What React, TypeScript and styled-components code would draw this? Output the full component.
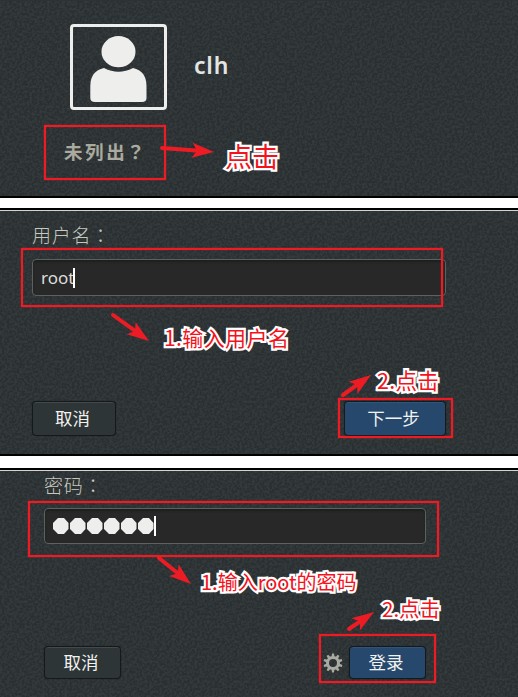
import React from "react";
import styled, { createGlobalStyle } from "styled-components";

const RED = "#ed1c24";
const CJK = '"Noto Sans CJK SC", sans-serif';

const GlobalStyle = createGlobalStyle`
  *, *::before, *::after { box-sizing: border-box; }
  body { margin: 0; background: #fff; font-family: ${CJK}; overflow: hidden; }
`;

const Page = styled.main`
  width: 518px;
  height: 697px;
  display: flex;
  flex-direction: column;
  gap: 10px;
  overflow: hidden;
`;

const Panel = styled.section<{ $height: number; $lit?: boolean; $after?: number }>`
  position: relative;
  flex: none;
  display: flex;
  flex-direction: column;
  height: ${(p) => p.$height}px;
  margin-bottom: ${(p) => p.$after ?? 0}px;
  border-bottom: 2px solid #000;
  border-top: ${(p) => (p.$lit ? "2px solid #000" : "0")};
  background: #2d3335;
  box-shadow: ${(p) => (p.$lit ? "inset 0 1px #d2d3d3" : "none")};
`;

const Grain = styled.svg`
  position: absolute;
  left: 0;
  top: 1px;
  width: 100%;
  height: calc(100% - 1px);
  opacity: 0.06;
`;

const UserRow = styled.div`
  position: relative;
  display: flex;
  align-items: center;
  gap: 27px;
  padding: 24px 0 0 70px;
`;

const Avatar = styled.div`
  width: 97px;
  height: 86px;
  border: 3px solid #eeeeec;
  border-radius: 4px;
  svg { display: block; }
`;

const UserName = styled.span`
  font: 600 23px/30px "Noto Sans", sans-serif;
  letter-spacing: 0.8px;
  color: #e3e5e3;
  margin-top: -4px;
`;

/* Full-width punctuation centred in its cell. */
const Punct = styled.span`
  font-family: "Noto Sans CJK TC", sans-serif;
`;

const NotListed = styled.a`
  position: relative;
  margin: 26px 0 0 64px;
  font: 700 18.5px/30px ${CJK};
  letter-spacing: 2.6px;
  color: #aaaa9f;
  ${Punct} { margin-left: -1px; }
`;

const Label = styled.label<{ $x: number; $y: number }>`
  position: relative;
  margin: ${(p) => p.$y}px 0 0 ${(p) => p.$x}px;
  height: 28px;
  font-size: 19px;
  line-height: 26px;
  letter-spacing: 0.7px;
  font-weight: 300;
  color: #c6c8be;
`;

const Field = styled.div<{ $x: number; $y: number; $w: number; $h: number }>`
  position: relative;
  display: flex;
  align-items: center;
  width: ${(p) => p.$w}px;
  height: ${(p) => p.$h}px;
  margin: ${(p) => p.$y}px 0 0 ${(p) => p.$x}px;
  padding: 0 8px;
  border: 1px solid #5c615e;
  border-radius: 4px;
  background: #282828;
  box-shadow: inset 0 2px 2px #1d1f1f;
  font: 17px/24px "Noto Sans", sans-serif;
  color: #dddddb;
`;

const Caret = styled.i`
  width: 2px;
  height: 20px;
  margin-left: -1px;
  background: #fff;
`;

const Dots = styled.svg`
  display: block;
  margin-right: 1px;
`;

const Actions = styled.div<{ $x: number; $y: number; $right: number }>`
  position: relative;
  display: flex;
  align-items: center;
  margin-top: ${(p) => p.$y}px;
  padding: 0 ${(p) => p.$right}px 0 ${(p) => p.$x}px;
`;

const Button = styled.button<{ $w: number; $h: number; $primary?: boolean }>`
  width: ${(p) => p.$w}px;
  height: ${(p) => p.$h}px;
  margin-left: ${(p) => (p.$primary ? "auto" : "0")};
  padding: 0 3px 2px 0;
  border: 1px solid #15191b;
  border-radius: 4px;
  background: ${(p) => (p.$primary ? "#26486d" : "#2e3537")};
  box-shadow: inset 0 1px ${(p) => (p.$primary ? "#31547a" : "#434a4c")}, 0 0 1px #15191b;
  color: #f2f2f0;
  font: 400 17.5px/28px ${CJK};
`;

const Gear = styled.svg`
  margin-left: auto;
  margin-right: 6px;
  & + button { margin-left: 0; }
`;

const Marker = styled.div<{ $x: number; $y: number; $w: number; $h: number }>`
  position: absolute;
  left: ${(p) => p.$x}px;
  top: ${(p) => p.$y}px;
  width: ${(p) => p.$w}px;
  height: ${(p) => p.$h}px;
  border: 2px solid ${RED};
  box-shadow: 0 0 1px ${RED}, inset 0 0 1px ${RED};
`;

const Note = styled.span<{ $x: number; $y: number; $size: number; $track?: number }>`
  position: absolute;
  left: ${(p) => p.$x}px;
  top: ${(p) => p.$y}px;
  font-size: ${(p) => p.$size}px;
  line-height: 30px;
  letter-spacing: ${(p) => p.$track ?? 0}px;
  white-space: nowrap;
  color: #f5121d;
  -webkit-text-stroke: 4.4px #fff;
  paint-order: stroke fill;
  stroke-linejoin: round;
`;

const ArrowSvg = styled.svg<{ $x: number; $y: number }>`
  position: absolute;
  left: ${(p) => p.$x}px;
  top: ${(p) => p.$y}px;
  overflow: visible;
`;

/* Arrow starting at (x, y) and pointing dx, dy away. */
function Arrow({ x, y, dx, dy, head = 20 }: { x: number; y: number; dx: number; dy: number; head?: number }) {
  const len = Math.hypot(dx, dy);
  const angle = (Math.atan2(dy, dx) * 180) / Math.PI;
  return (
    <ArrowSvg $x={x} $y={y} width="1" height="1">
      <g transform={`rotate(${angle})`} fill={RED}>
        <path d={`M0 0H${len - head + 5}`} stroke={RED} strokeWidth="4" strokeLinecap="round" />
        <path d={`M${len} 0L${len - head - 2} -7.5L${len - head + 3} 0L${len - head - 2} 7.5Z`} />
      </g>
    </ArrowSvg>
  );
}

function Texture({ id }: { id: string }) {
  return (
    <Grain aria-hidden="true">
      <filter id={id} x="0" y="0" width="100%" height="100%">
        <feTurbulence type="fractalNoise" baseFrequency="0.4" numOctaves="2" />
        <feColorMatrix values="1.4 0 0 0 -.6  1.4 0 0 0 -.6  1.4 0 0 0 -.6  0 0 0 0 1" />
      </filter>
      <rect width="100%" height="100%" filter={`url(#${id})`} />
    </Grain>
  );
}

const teeth = [0, 36, 72, 108, 144, 180, 216, 252, 288, 324];

export default function App() {
  return (
    <>
      <GlobalStyle />
      <Page>
        <Panel $height={198}>
          <Texture id="grain-a" />
          <UserRow>
            <Avatar>
              <svg width="91" height="80" viewBox="0 0 91 80" fill="#eeeeec">
                <ellipse cx="45.5" cy="24.7" rx="17" ry="15.6" />
                <path d="M31 41Q45.5 48.5 60 41Q73.500 44 73.500 59V71Q73.500 75 69 75H22Q17.300 75 17.300 71V59Q17.300 44 31 41Z" />
              </svg>
            </Avatar>
            <UserName>clh</UserName>
          </UserRow>
          <NotListed>未列出<Punct>？</Punct></NotListed>
          <Marker $x={44} $y={125} $w={122} $h={55} />
          <Arrow x={162} y={148} dx={52} dy={4} />
          <Note $x={225} $y={141} $size={27}>点击</Note>
        </Panel>

        <Panel $height={248} $lit $after={2}>
          <Texture id="grain-b" />
          <Label $x={32} $y={12}>用户名<Punct>：</Punct></Label>
          <Field $x={32} $y={9} $w={414} $h={37}>
            root<Caret />
          </Field>
          <Actions $x={32} $y={105} $right={72}>
            <Button $w={84} $h={35}>取消</Button>
            <Button $w={102} $h={35} $primary>下一步</Button>
          </Actions>
          <Marker $x={21} $y={38} $w={422} $h={59} />
          <Arrow x={113} y={105} dx={36} dy={26} />
          <Note $x={164} $y={112} $size={21} $track={0.4}>1.输入用户名</Note>
          <Marker $x={338} $y={188} $w={115} $h={40} />
          <Arrow x={343} y={185} dx={28} dy={-20} />
          <Note $x={377} $y={155} $size={21.5} $track={0.3}>2.点击</Note>
        </Panel>

        <Panel $height={236} $lit>
          <Texture id="grain-c" />
          <Label $x={44} $y={2}>密码<Punct>：</Punct></Label>
          <Field $x={44} $y={8} $w={382} $h={36}>
            <Dots width="101" height="18" fill="#eeeeec">
              {[0, 1, 2, 3, 4, 5].map((i) => (
                <path key={i} transform={`translate(${i * 17} 1)`} d="M5 0H11L15.500 5V11L11 16H5L0 11V5Z" />
              ))}
            </Dots>
            <Caret />
          </Field>
          <Actions $x={44} $y={102} $right={92}>
            <Button $w={77} $h={33}>取消</Button>
            <Gear width="20" height="20" viewBox="-10 -10 20 20">
              <circle r="5.5" fill="none" stroke="#a9aaa2" strokeWidth="3" />
              {teeth.map((a) => (
                <path key={a} d="M-1.500 -6L-1 -9.500H1L1.500 -6Z" fill="#a9aaa2" transform={`rotate(${a})`} />
              ))}
            </Gear>
            <Button $w={77} $h={33} $primary>登录</Button>
          </Actions>
          <Marker $x={28} $y={31} $w={411} $h={56} />
          <Arrow x={159} y={88} dx={32} dy={26} />
          <Note $x={201} $y={97} $size={20}>1.输入root的密码</Note>
          <Marker $x={319} $y={164} $w={117} $h={49} />
          <Arrow x={349} y={159} dx={25} dy={-17} />
          <Note $x={382} $y={123} $size={20.5}>2.点击</Note>
        </Panel>
      </Page>
    </>
  );
}
